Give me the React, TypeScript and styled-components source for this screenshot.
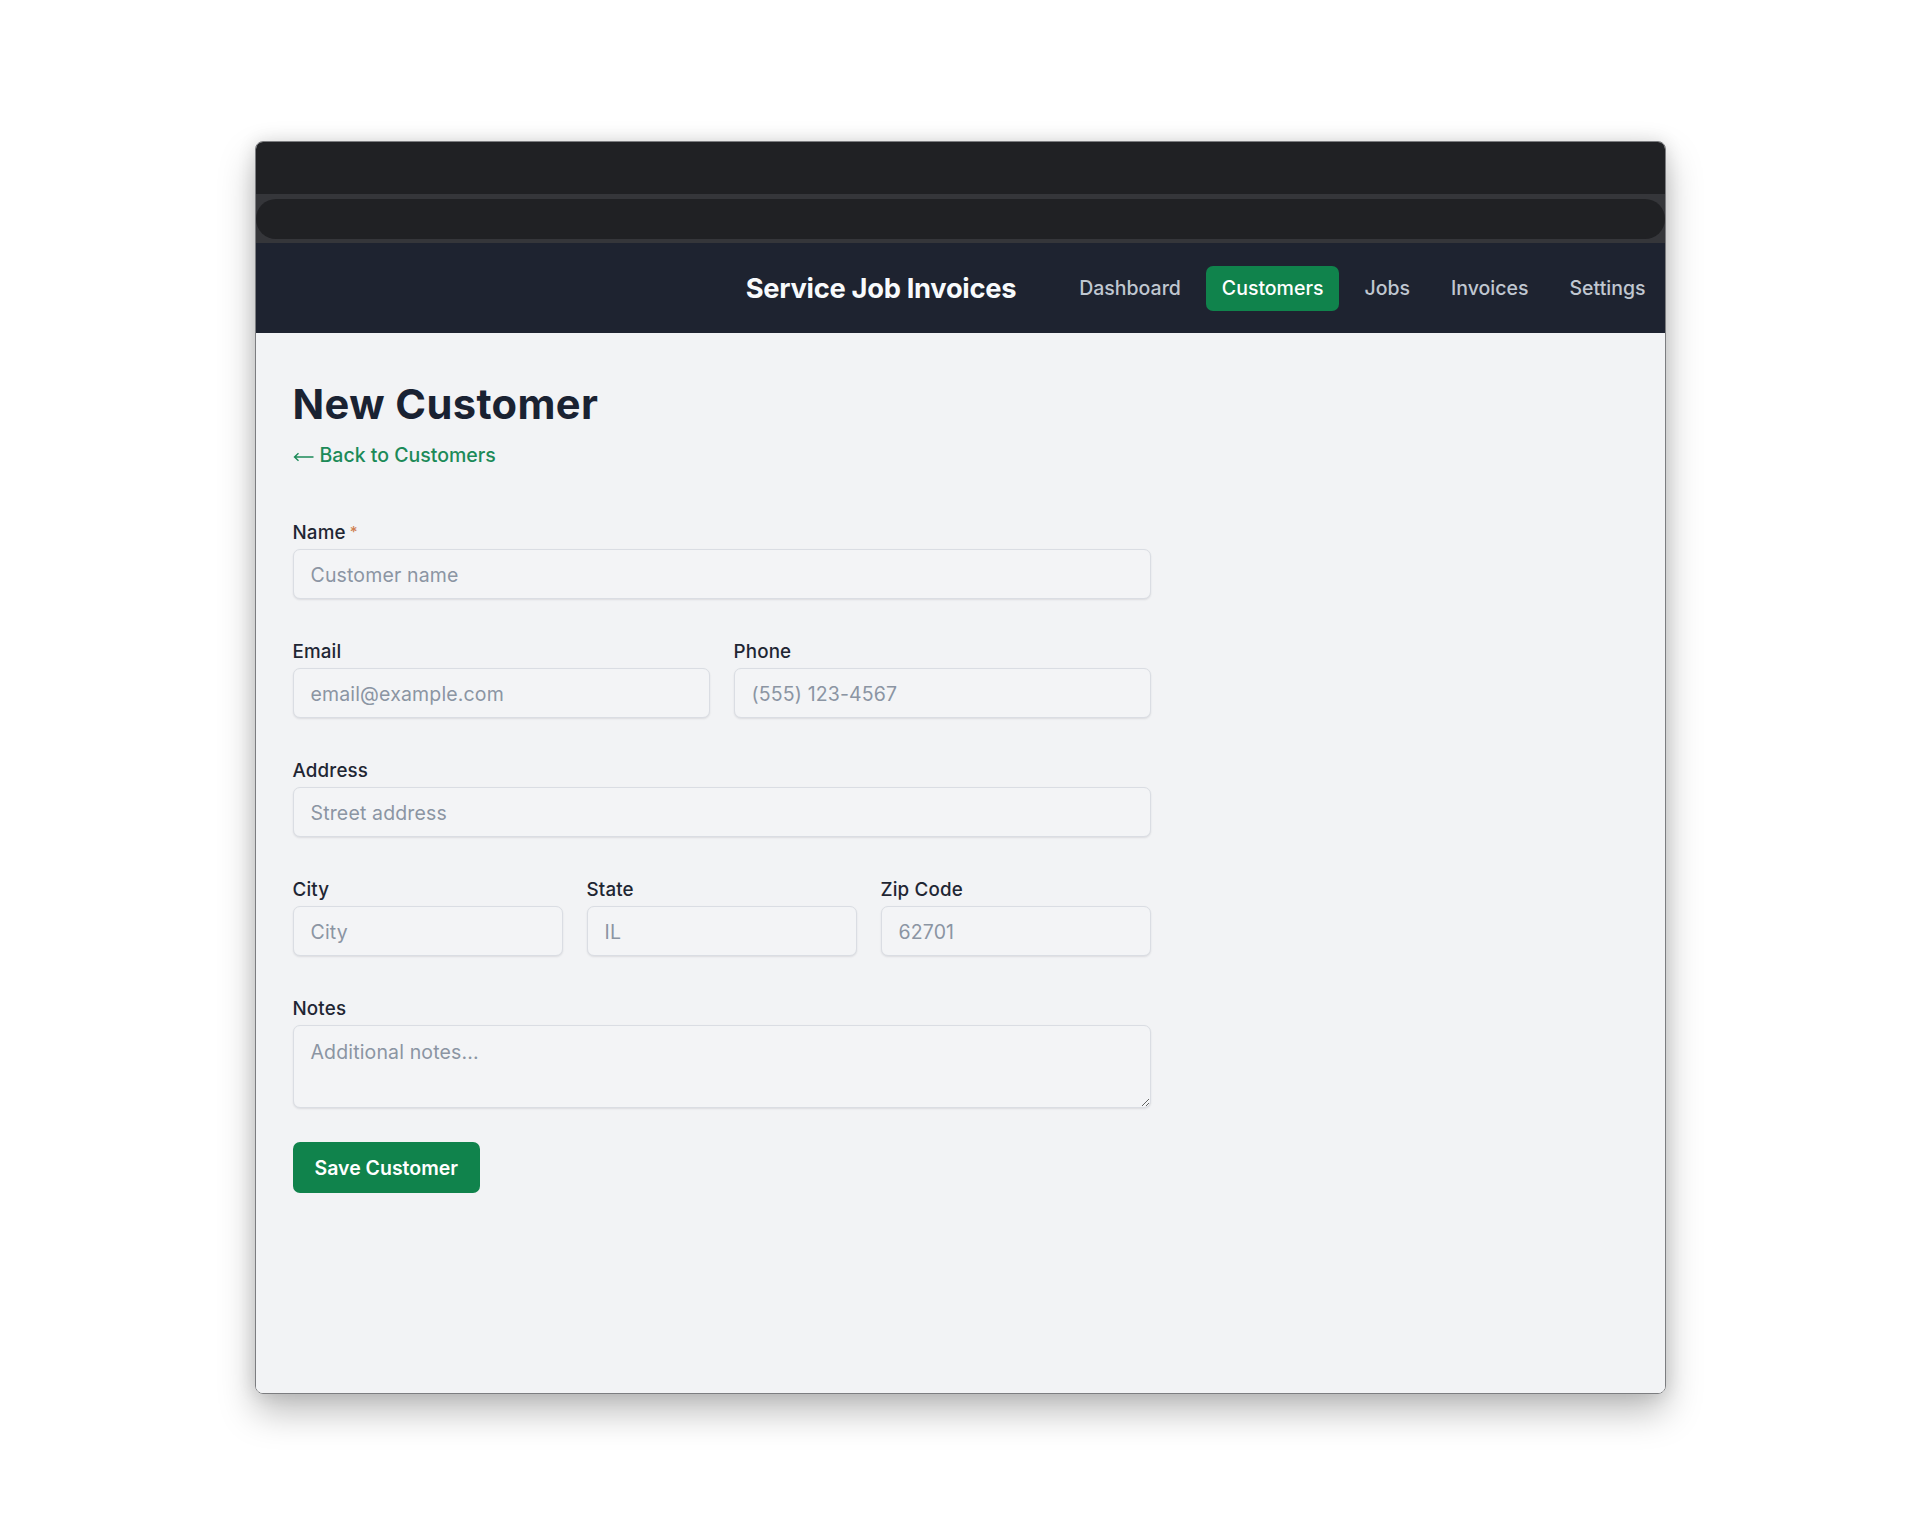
import * as React from "react";
import styled, { createGlobalStyle } from "styled-components";

const GlobalStyle = createGlobalStyle`
  html, body {
    margin: 0;
    background: #ffffff;
  }
  body {
    font-family: "Inter", "Noto Sans", sans-serif;
  }
  * {
    box-sizing: border-box;
  }
`;

const Stage = styled.div`
  display: flex;
  justify-content: center;
  padding-top: 141px;
  min-height: 1536px;
`;

const Window = styled.div`
  width: 1411px;
  height: 1253px;
  display: flex;
  flex-direction: column;
  border: 1px solid #7c7d80;
  border-radius: 8px;
  overflow: hidden;
  box-shadow: 0 18px 36px rgba(0, 0, 0, 0.26), 0 0 18px rgba(0, 0, 0, 0.12);
`;

// ブラウザのタイトルバー
const TitleBar = styled.div`
  height: 52px;
  background: #202124;
`;

const Toolbar = styled.div`
  background: #35363a;
  padding: 5px 0 4px;
`;

const AddressPill = styled.div`
  height: 40px;
  border-radius: 20px;
  background: #202124;
`;

const NavBar = styled.nav`
  height: 90px;
  background: #1e2330;
  display: flex;
  align-items: center;
  justify-content: flex-end;
  padding-right: 3px;
`;

const Brand = styled.div`
  font-size: 27.3px;
  font-weight: 700;
  letter-spacing: -0.3px;
  color: #f8fafc;
  margin-right: 47px;
`;

const NavLinks = styled.div`
  display: flex;
  gap: 9px;
`;

const NavLink = styled.a<{ $active?: boolean }>`
  display: block;
  padding: 10px 16px;
  font-size: 19.5px;
  line-height: 25px;
  font-weight: 500;
  border-radius: 7px;
  text-decoration: none;
  color: ${(p) => (p.$active ? "#ffffff" : "#c0c7d1")};
  background: ${(p) => (p.$active ? "#10834c" : "transparent")};
`;

const Main = styled.main`
  flex: 1;
  background: #f2f3f5;
  padding: 46px 37px;
`;

const Heading = styled.h1`
  margin: 0;
  font-size: 41.6px;
  line-height: 50px;
  font-weight: 700;
  letter-spacing: 0.4px;
  color: #1a2232;
`;

const BackLink = styled.a`
  display: inline-flex;
  align-items: center;
  margin-top: 13px;
  font-size: 19.5px;
  line-height: 26px;
  font-weight: 500;
  color: #1c8a58;
  text-decoration: none;
`;

const ArrowIcon = styled.svg`
  width: 21px;
  height: 10px;
  margin: 3px 6px 0 0;
`;

const Form = styled.form`
  width: 858px;
  margin-top: 51px;
`;

const Fields = styled.div`
  display: flex;
  flex-direction: column;
  gap: 40px;
`;

const Row = styled.div<{ $cols: number }>`
  display: grid;
  grid-template-columns: repeat(${(p) => p.$cols}, 1fr);
  gap: 24px;
`;

const Field = styled.div`
  display: flex;
  flex-direction: column;
`;

const Label = styled.label`
  font-size: 18.8px;
  line-height: 26px;
  font-weight: 500;
  letter-spacing: 0.15px;
  color: #1f2633;
  margin-bottom: 3px;
`;

const Required = styled.span`
  color: #cf7f50;
  margin-left: 4px;
  font-size: 15px;
  vertical-align: 2px;
`;

const fieldStyle = `
  width: 100%;
  border: 1px solid #dadde3;
  border-radius: 7px;
  background: #f3f4f6;
  box-shadow: 0 1px 2px rgba(16, 24, 40, 0.1);
  font-family: "Inter", "Noto Sans", sans-serif;
  font-size: 19.5px;
  letter-spacing: 0.15px;
  color: #1f2633;
  padding: 2px 17px 0;
  outline: none;
  &::placeholder {
    color: #8b95a3;
  }
`;

const Input = styled.input`
  ${fieldStyle}
  height: 50px;
`;

const TextArea = styled.textarea`
  ${fieldStyle}
  height: 83px;
  padding-top: 15px;
  line-height: 23px;
  resize: vertical;
  display: block;
`;

const SaveButton = styled.button`
  margin-top: 34px;
  height: 51px;
  padding: 0 22px;
  border: none;
  border-radius: 7px;
  background: #10834c;
  color: #ffffff;
  font-family: "Inter", "Noto Sans", sans-serif;
  font-size: 19.5px;
  font-weight: 600;
`;

const links = ["Dashboard", "Customers", "Jobs", "Invoices", "Settings"];

const App = () => {
  return (
    <>
      <GlobalStyle />
      <Stage>
        <Window>
          <TitleBar />
          <Toolbar>
            <AddressPill />
          </Toolbar>
          <NavBar>
            <Brand>Service Job Invoices</Brand>
            <NavLinks>
              {links.map((l) => (
                <NavLink key={l} href="#" $active={l === "Customers"}>
                  {l}
                </NavLink>
              ))}
            </NavLinks>
          </NavBar>
          <Main>
            <Heading>New Customer</Heading>
            <BackLink href="#">
              <ArrowIcon viewBox="0 0 21 10" fill="none" stroke="currentColor" strokeWidth="1.4">
                <path d="M20.5 5H1.5M5.5 1.2L1.5 5l4 3.8" />
              </ArrowIcon>
              Back to Customers
            </BackLink>
            <Form onSubmit={(e) => e.preventDefault()}>
              <Fields>
                <Field>
                  <Label>
                    Name<Required>*</Required>
                  </Label>
                  <Input placeholder="Customer name" />
                </Field>
                <Row $cols={2}>
                  <Field>
                    <Label>Email</Label>
                    <Input placeholder="email@example.com" />
                  </Field>
                  <Field>
                    <Label>Phone</Label>
                    <Input placeholder="(555) 123-4567" />
                  </Field>
                </Row>
                <Field>
                  <Label>Address</Label>
                  <Input placeholder="Street address" />
                </Field>
                <Row $cols={3}>
                  <Field>
                    <Label>City</Label>
                    <Input placeholder="City" />
                  </Field>
                  <Field>
                    <Label>State</Label>
                    <Input placeholder="IL" />
                  </Field>
                  <Field>
                    <Label>Zip Code</Label>
                    <Input placeholder="62701" />
                  </Field>
                </Row>
                <Field>
                  <Label>Notes</Label>
                  <TextArea placeholder="Additional notes..." />
                </Field>
              </Fields>
              <SaveButton type="submit">Save Customer</SaveButton>
            </Form>
          </Main>
        </Window>
      </Stage>
    </>
  );
};

export default App;
